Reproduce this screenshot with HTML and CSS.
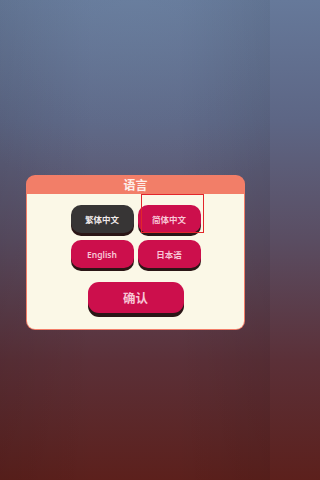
FILE: index.html
```html
<!DOCTYPE html>
<html lang="zh">
<head>
<meta charset="utf-8">
<link rel="stylesheet" href="styles.css">
</head>
<body>
<div class="screen">
  <div class="panel">
    <div class="panel-title">语言</div>
    <div class="panel-body">
      <div class="lang-grid">
        <div class="btn btn-dark">繁体中文</div>
        <div class="btn btn-red btn-selected">简体中文<span class="select-box"></span></div>
        <div class="btn btn-red">English</div>
        <div class="btn btn-red">日本语</div>
      </div>
      <div class="btn btn-red btn-confirm">确认</div>
    </div>
  </div>
</div>
</body>
</html>
```
FILE: styles.css
```css
html, body {
  margin: 0;
  padding: 0;
}
html {
  background: linear-gradient(to bottom, #66799a 0%, #5d6685 25%, #5a4d62 50%, #5b3038 75%, #5c201c 100%);
  min-height: 480px;
}
body {
  width: 270px;
  height: 480px;
  overflow: hidden;
  font-family: "Noto Sans", "Noto Sans CJK SC", sans-serif;
}
.screen {
  width: 270px;
  height: 480px;
  box-sizing: border-box;
  padding-top: 175px;
  background:
    radial-gradient(ellipse 120% 60% at 50% 0%, rgba(110,135,165,0.35), rgba(0,0,0,0) 70%),
    linear-gradient(to right, rgba(0,0,0,0.08), rgba(0,0,0,0) 35%, rgba(0,0,0,0) 65%, rgba(0,0,0,0.08)),
    linear-gradient(to bottom, #66799a 0%, #5d6685 25%, #5a4d62 50%, #5b3038 75%, #5c201c 100%);
}
.panel {
  margin-left: 26px;
  width: 219px;
  height: 155px;
  border-radius: 9px;
  overflow: hidden;
  display: flex;
  flex-direction: column;
  background: #f27e68;
}
.panel-title {
  height: 19px;
  line-height: 19px;
  text-align: center;
  color: #fdeeea;
  font-weight: 600;
  font-size: 12px;
  font-family: "Noto Sans CJK SC", sans-serif;
}
.panel-body {
  flex: 1;
  margin: 0 1px 1px 1px;
  border-radius: 0 0 8px 8px;
  background: #fbf8e7;
  display: flex;
  flex-direction: column;
  align-items: center;
  padding-top: 11px;
}
.lang-grid {
  display: grid;
  grid-template-columns: 63px 63px;
  column-gap: 4px;
  row-gap: 7px;
}
.btn {
  position: relative;
  height: 28px;
  border-radius: 10px;
  display: flex;
  align-items: center;
  justify-content: center;
  font-size: 8.5px;
  font-weight: 600;
  font-family: "Noto Sans", "Noto Sans CJK SC", sans-serif;
  box-shadow: 0 3px 0 #2b1616;
}
.btn-dark {
  background: #373535;
  color: #f0eaea;
}
.btn-red {
  background: #cc0f4c;
  color: #f8c6d6;
}
.btn-confirm {
  margin-top: 14px;
  width: 96px;
  height: 31px;
  border-radius: 11px;
  font-size: 12.5px;
  font-weight: bold;
  font-family: "Noto Sans CJK SC", sans-serif;
  box-shadow: 0 4px 0 #2b1616;
}
.select-box {
  position: absolute;
  left: 3px;
  top: -11px;
  width: 63px;
  height: 39px;
  box-sizing: border-box;
  border: 1.5px solid #e2262b;
}
```
